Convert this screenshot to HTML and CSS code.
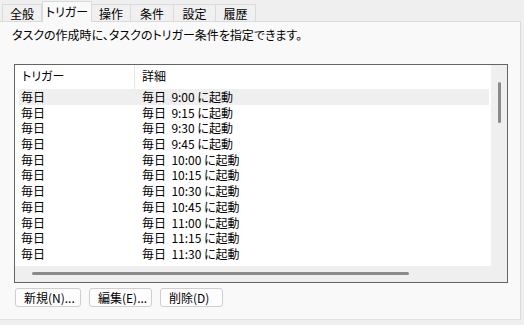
FILE: index.html
```html
<!DOCTYPE html>
<html lang="ja">
<head>
<meta charset="utf-8">
<link rel="stylesheet" href="styles.css">
</head>
<body>
<div class="tabs">
  <div class="tab t1">全般</div>
  <div class="tab t2 active">トリガー</div>
  <div class="tab t3">操作</div>
  <div class="tab t4">条件</div>
  <div class="tab t5">設定</div>
  <div class="tab t6">履歴</div>
</div>
<div class="panel">
  <p class="desc">タスクの作成時に、タスクのトリガー条件を指定できます。</p>
  <div class="list">
    <div class="view">
      <div class="head">
        <div class="hcell c1">トリガー</div>
        <div class="hcell c2">詳細</div>
      </div>
      <div class="rows">
        <div class="row sel"><span class="c1">毎日</span><span class="c2">毎日&nbsp; 9:00 に起動</span></div>
        <div class="row"><span class="c1">毎日</span><span class="c2">毎日&nbsp; 9:15 に起動</span></div>
        <div class="row"><span class="c1">毎日</span><span class="c2">毎日&nbsp; 9:30 に起動</span></div>
        <div class="row"><span class="c1">毎日</span><span class="c2">毎日&nbsp; 9:45 に起動</span></div>
        <div class="row"><span class="c1">毎日</span><span class="c2">毎日&nbsp; 10:00 に起動</span></div>
        <div class="row"><span class="c1">毎日</span><span class="c2">毎日&nbsp; 10:15 に起動</span></div>
        <div class="row"><span class="c1">毎日</span><span class="c2">毎日&nbsp; 10:30 に起動</span></div>
        <div class="row"><span class="c1">毎日</span><span class="c2">毎日&nbsp; 10:45 に起動</span></div>
        <div class="row"><span class="c1">毎日</span><span class="c2">毎日&nbsp; 11:00 に起動</span></div>
        <div class="row"><span class="c1">毎日</span><span class="c2">毎日&nbsp; 11:15 に起動</span></div>
        <div class="row"><span class="c1">毎日</span><span class="c2">毎日&nbsp; 11:30 に起動</span></div>
      </div>
    </div>
    <div class="vscroll"><div class="vthumb"></div></div>
    <div class="hscroll"><div class="hthumb"></div></div>
    <div class="corner"></div>
  </div>
  <div class="buttons">
    <button class="btn b1">新規(N)...</button>
    <button class="btn b2">編集(E)...</button>
    <button class="btn b2">削除(D)</button>
  </div>
</div>
</body>
</html>
```
FILE: styles.css
```css
html, body {
  margin: 0;
  padding: 0;
}
body {
  background: #efefef;
  width: 524px;
  height: 325px;
  overflow: hidden;
  font-family: "Noto Sans CJK JP", "Noto Sans", sans-serif;
  font-size: 12px;
  font-feature-settings: "palt";
  color: #000;
}
.tabs {
  display: flex;
  align-items: flex-end;
  height: 21px;
  padding-left: 2px;
  position: relative;
  z-index: 1;
}
.tab {
  height: 17px;
  line-height: 17px;
  text-align: center;
  border: 1px solid #dadada;
  border-bottom: none;
  background: #f0f0f0;
  margin-left: -1px;
  box-sizing: border-box;
}
.t1 { width: 40px; margin-left: 0; }
.t2 { width: 50px; margin-left: 0; }
.t3 { width: 40px; }
.t4 { width: 44px; }
.t5 { width: 43px; }
.t6 { width: 41px; }
.tab.active {
  height: 21px;
  line-height: 19px;
  background: #f9f9f9;
  margin-bottom: -1px;
  position: relative;
  z-index: 2;
}
.panel {
  width: 521px;
  height: 299px;
  box-sizing: border-box;
  background: #f9f9f9;
  border-top: 1px solid #dadada;
  border-right: 1px solid #dadada;
  border-bottom: 1px solid #e2e2e2;
  display: flex;
  flex-direction: column;
}
.desc {
  margin: 5px 0 0 12px;
  line-height: 16px;
}
.list {
  margin: 21px 0 0 14px;
  width: 494px;
  height: 219px;
  box-sizing: border-box;
  border: 1px solid #646464;
  display: grid;
  grid-template-columns: 1fr 16px;
  grid-template-rows: 1fr 16px;
  background: #fff;
}
.view {
  overflow: hidden;
  background: #fff;
}
.head {
  display: flex;
  height: 24px;
  align-items: stretch;
}
.hcell {
  line-height: 22px;
}
.hcell.c1 {
  width: 112px;
  padding-left: 7px;
  border-right: 1px solid #e5e5e5;
}
.hcell.c2 {
  padding-left: 7px;
}
.rows {
  padding: 0 2px 0 4px;
}
.row {
  display: flex;
  height: 15.7px;
  line-height: 15.7px;
}
.row.sel {
  background: #efefef;
}
.row .c1 {
  width: 123px;
  padding-left: 2px;
  box-sizing: border-box;
}
.vscroll {
  background: #efefef;
  position: relative;
}
.vthumb {
  position: absolute;
  left: 7px;
  top: 17px;
  width: 3px;
  height: 41px;
  background: #8a8a8a;
  border-radius: 2px;
}
.hscroll {
  background: #efefef;
  position: relative;
}
.hthumb {
  position: absolute;
  left: 17px;
  top: 6px;
  width: 377px;
  height: 3px;
  background: #8a8a8a;
  border-radius: 2px;
}
.corner {
  background: #efefef;
}
.buttons {
  display: flex;
  gap: 8px;
  margin: 5px 0 0 15px;
}
.btn {
  font: inherit;
  font-feature-settings: "palt";
  height: 19px;
  line-height: 17px;
  padding: 0;
  border: 1px solid #cfcfcf;
  border-radius: 3px;
  background: #fdfdfd;
  color: #000;
  text-align: left;
  box-sizing: border-box;
}
.b1 { width: 66px; padding-left: 8px; }
.b2 { width: 63px; padding-left: 8px; }
```
